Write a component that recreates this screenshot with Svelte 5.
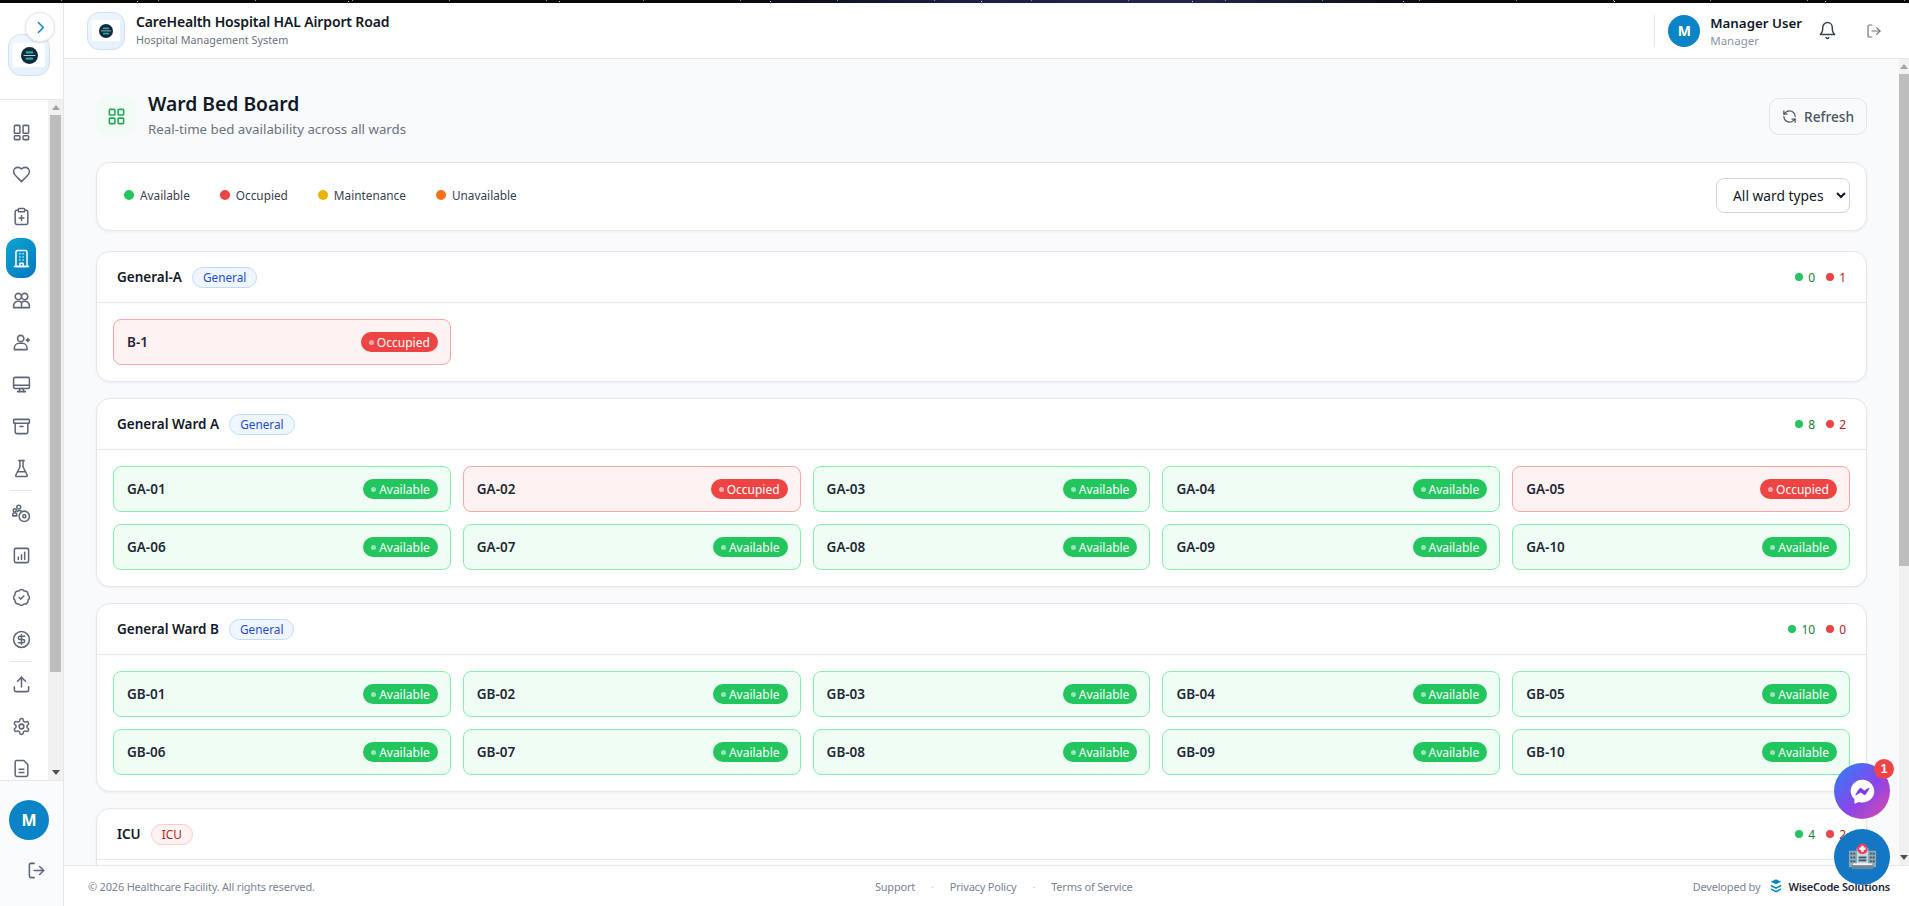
<script>
  const navTop = [
    ["M4 3h5a1 1 0 0 1 1 1v8a1 1 0 0 1-1 1H4a1 1 0 0 1-1-1V4a1 1 0 0 1 1-1z", "M15 3h5a1 1 0 0 1 1 1v8a1 1 0 0 1-1 1h-5a1 1 0 0 1-1-1V4a1 1 0 0 1 1-1z", "M4 16h5a1 1 0 0 1 1 1v3a1 1 0 0 1-1 1H4a1 1 0 0 1-1-1v-3a1 1 0 0 1 1-1z", "M15 16h5a1 1 0 0 1 1 1v3a1 1 0 0 1-1 1h-5a1 1 0 0 1-1-1v-3a1 1 0 0 1 1-1z"],
    ["M19 14c1.49-1.46 3-3.21 3-5.5A5.5 5.5 0 0 0 16.5 3c-1.76 0-3 .5-4.5 2-1.5-1.5-2.74-2-4.5-2A5.5 5.5 0 0 0 2 8.5c0 2.3 1.5 4.05 3 5.5l7 7Z"],
    ["M9 2h6a1 1 0 0 1 1 1v2a1 1 0 0 1-1 1H9a1 1 0 0 1-1-1V3a1 1 0 0 1 1-1z", "M16 4h2a2 2 0 0 1 2 2v14a2 2 0 0 1-2 2H6a2 2 0 0 1-2-2V6a2 2 0 0 1 2-2h2", "M9 14h6", "M12 17v-6"],
    ["M5 22V4a2 2 0 0 1 2-2h10a2 2 0 0 1 2 2v18Z", "M3 22h18", "M10 22v-4h4v4", "M10 6h.01", "M14 6h.01", "M10 10h.01", "M14 10h.01", "M10 14h.01", "M14 14h.01"],
    ["M8 11a4 4 0 1 0 0-8 4 4 0 0 0 0 8z", "M16 11a4 4 0 1 0 0-8 4 4 0 0 0 0 8z", "M2 21v-2a6 6 0 0 1 10-4.5A6 6 0 0 1 22 19v2Z", "M12 14.5V21"],
    ["M11 11a4 4 0 1 0 0-8 4 4 0 0 0 0 8z", "M3 21v-2a6 6 0 0 1 6-6h4a6 6 0 0 1 6 6v2Z", "M20 7v4", "M18 9h4"],
    ["M4 3h16a2 2 0 0 1 2 2v10a2 2 0 0 1-2 2H4a2 2 0 0 1-2-2V5a2 2 0 0 1 2-2z", "M2 13h20", "M9 21l1-4h4l1 4", "M7 21h10"],
    ["M3 3h18a1 1 0 0 1 1 1v3a1 1 0 0 1-1 1H3a1 1 0 0 1-1-1V4a1 1 0 0 1 1-1z", "M4 8v11a2 2 0 0 0 2 2h12a2 2 0 0 0 2-2V8", "M10 12h4"],
    ["M10 2v7.53a2 2 0 0 1-.21.9L4.72 20.55A1 1 0 0 0 5.62 22h12.76a1 1 0 0 0 .9-1.45l-5.07-10.12a2 2 0 0 1-.21-.9V2", "M8.5 2h7", "M7 16h10"],
  ];
  const navMid = [
    ["M8.5 6.5a2.5 2.5 0 1 0 0-5 2.5 2.5 0 0 0 0 5z", "M3.5 10a2 2 0 1 0 0-4 2 2 0 0 0 0 4z", "M1 15v-1.5a2.5 2.5 0 0 1 5 0V15z", "M7 9.5a3 3 0 0 1 5 0", "M15.5 22a6.5 6.5 0 1 0 0-13 6.5 6.5 0 0 0 0 13z", "M15.5 17.5a2 2 0 1 0 0-4 2 2 0 0 0 0 4z"],
    ["M5 3h14a2 2 0 0 1 2 2v14a2 2 0 0 1-2 2H5a2 2 0 0 1-2-2V5a2 2 0 0 1 2-2z", "M8 17v-3", "M12 17v-6", "M16 17V8"],
    ["M3.85 8.62a4 4 0 0 1 4.78-4.77 4 4 0 0 1 6.74 0 4 4 0 0 1 4.78 4.78 4 4 0 0 1 0 6.74 4 4 0 0 1-4.77 4.78 4 4 0 0 1-6.75 0 4 4 0 0 1-4.78-4.77 4 4 0 0 1 0-6.76Z", "m9 12 2 2 4-4"],
    ["M12 22a10 10 0 1 0 0-20 10 10 0 0 0 0 20z", "M16 8h-6a2 2 0 1 0 0 4h4a2 2 0 1 1 0 4H8", "M12 18V6"],
  ];
  const gear = ["M12.22 2h-.44a2 2 0 0 0-2 2v.18a2 2 0 0 1-1 1.73l-.43.25a2 2 0 0 1-2 0l-.15-.08a2 2 0 0 0-2.73.73l-.22.38a2 2 0 0 0 .73 2.73l.15.1a2 2 0 0 1 1 1.72v.51a2 2 0 0 1-1 1.74l-.15.09a2 2 0 0 0-.73 2.73l.22.38a2 2 0 0 0 2.73.73l.15-.08a2 2 0 0 1 2 0l.43.25a2 2 0 0 1 1 1.73V20a2 2 0 0 0 2 2h.44a2 2 0 0 0 2-2v-.18a2 2 0 0 1 1-1.73l.43-.25a2 2 0 0 1 2 0l.15.08a2 2 0 0 0 2.73-.73l.22-.39a2 2 0 0 0-.73-2.73l-.15-.08a2 2 0 0 1-1-1.74v-.5a2 2 0 0 1 1-1.74l.15-.09a2 2 0 0 0 .73-2.73l-.22-.38a2 2 0 0 0-2.73-.73l-.15.08a2 2 0 0 1-2 0l-.43-.25a2 2 0 0 1-1-1.73V4a2 2 0 0 0-2-2z", "M12 15a3 3 0 1 0 0-6 3 3 0 0 0 0 6z"];
  const navBottom = [
    ["M12 15V3", "M7 8l5-5 5 5", "M21 15v4a2 2 0 0 1-2 2H5a2 2 0 0 1-2-2v-4"],
    gear,
    ["M15 2H6a2 2 0 0 0-2 2v16a2 2 0 0 0 2 2h12a2 2 0 0 0 2-2V7Z", "M9 13h6", "M9 17h6"],
  ];
  const logout = ["M9 21H5a2 2 0 0 1-2-2V5a2 2 0 0 1 2-2h4", "M16 17l5-5-5-5", "M21 12H9"];

  const legend = [
    { label: "Available", color: "#22c55e" },
    { label: "Occupied", color: "#ef4444" },
    { label: "Maintenance", color: "#eab308" },
    { label: "Unavailable", color: "#f97316" },
  ];

  function ward(name, type, prefix, occupied = []) {
    const beds = [];
    for (let i = 1; i <= 10; i++) {
      const n = String(i).padStart(2, "0");
      beds.push({ id: prefix + "-" + n, occupied: occupied.includes(i) });
    }
    return { name, type, beds, free: 10 - occupied.length, taken: occupied.length };
  }

  const wards = [
    { name: "General-A", type: "General", beds: [{ id: "B-1", occupied: true }], free: 0, taken: 1 },
    ward("General Ward A", "General", "GA", [2, 5]),
    ward("General Ward B", "General", "GB"),
    { name: "ICU", type: "ICU", beds: [], free: 4, taken: 2 },
  ];
</script>

{#snippet icon(paths, size = 19, width = 1.9)}
  <svg class="ico" viewBox="0 0 24 24" width={size} height={size} fill="none" stroke="currentColor" stroke-width={width} stroke-linecap="round" stroke-linejoin="round">
    {#each paths as d}<path {d} />{/each}
  </svg>
{/snippet}

{#snippet logo(cls)}
  <div class="logo {cls}">
    <div class="logo-inner">
      <svg viewBox="0 0 20 20" class="logo-mark">
        <circle cx="10" cy="10" r="10" fill="#0f2a3d" />
        <rect x="5.5" y="5" width="9" height="2.6" rx="1.2" fill="#2aa6a0" />
        <rect x="3" y="9.4" width="14" height="1" fill="#d7e8ee" />
        <rect x="5.5" y="12.4" width="9" height="2.6" rx="1.2" fill="#2aa6a0" />
      </svg>
    </div>
  </div>
{/snippet}

{#snippet scrollbar(thumb)}
  <div class="bar">
    <div class="bar-btn"><i class="up"></i></div>
    <div class="bar-track"><div class="bar-thumb" style="height:{thumb}px"></div></div>
    <div class="bar-btn"><i class="down"></i></div>
  </div>
{/snippet}

<div class="strip"></div>
<div class="app">
  <aside class="sidebar">
    <div class="side-top">
      <button class="toggle" aria-label="Expand sidebar">
        <svg viewBox="0 0 24 24" width="17" height="17" fill="none" stroke="#0284c7" stroke-width="2" stroke-linecap="round" stroke-linejoin="round"><path d="m9 5 7 7-7 7" /></svg>
      </button>
      {@render logo("logo-big")}
    </div>
    <div class="nav-wrap">
      <nav class="nav">
        {#each navTop as paths, i}
          <div class="nav-item" class:active={i === 3}>{@render icon(paths)}</div>
        {/each}
        <div class="nav-sep"></div>
        {#each navMid as paths}
          <div class="nav-item">{@render icon(paths)}</div>
        {/each}
        <div class="nav-sep"></div>
        {#each navBottom as paths}
          <div class="nav-item">{@render icon(paths)}</div>
        {/each}
      </nav>
      {@render scrollbar(557)}
    </div>
    <div class="side-bottom">
      <div class="avatar big">M</div>
      <div class="side-logout">{@render icon(logout)}</div>
    </div>
  </aside>

  <div class="right">
    <header class="topbar">
      {@render logo("logo-small")}
      <div class="brand">
        <div class="brand-name">CareHealth Hospital HAL Airport Road</div>
        <div class="brand-sub">Hospital Management System</div>
      </div>
      <div class="top-user">
        <div class="avatar">M</div>
        <div class="user-text">
          <div class="user-name">Manager User</div>
          <div class="user-role">Manager</div>
        </div>
      </div>
      <div class="bell">{@render icon(["M6 8a6 6 0 0 1 12 0c0 7 3 9 3 9H3s3-2 3-9", "M10.3 21a1.94 1.94 0 0 0 3.4 0"])}</div>
      <div class="top-logout">{@render icon(logout, 16, 1.75)}</div>
    </header>

    <div class="main-wrap">
      <main class="main">
        <div class="page-head">
          <div class="page-icon">{@render icon(["M4 3h5a1 1 0 0 1 1 1v5a1 1 0 0 1-1 1H4a1 1 0 0 1-1-1V4a1 1 0 0 1 1-1z", "M15 3h5a1 1 0 0 1 1 1v5a1 1 0 0 1-1 1h-5a1 1 0 0 1-1-1V4a1 1 0 0 1 1-1z", "M4 14h5a1 1 0 0 1 1 1v5a1 1 0 0 1-1 1H4a1 1 0 0 1-1-1v-5a1 1 0 0 1 1-1z", "M15 14h5a1 1 0 0 1 1 1v5a1 1 0 0 1-1 1h-5a1 1 0 0 1-1-1v-5a1 1 0 0 1 1-1z"], 19, 2)}</div>
          <div class="page-title">
            <h1>Ward Bed Board</h1>
            <p>Real-time bed availability across all wards</p>
          </div>
          <button class="refresh">
            {@render icon(["M21 12a9 9 0 0 0-9-9 9.75 9.75 0 0 0-6.74 2.74L3 8", "M3 3v5h5", "M3 12a9 9 0 0 0 9 9 9.75 9.75 0 0 0 6.74-2.74L21 16", "M16 16h5v5"], 15, 2)}
            Refresh
          </button>
        </div>

        <section class="card legend">
          <div class="legend-items">
            {#each legend as item}
              <span class="legend-item"><i class="dot" style="background:{item.color}"></i>{item.label}</span>
            {/each}
          </div>
          <select class="type-select">
            <option>All ward types</option>
            <option>General</option>
            <option>ICU</option>
          </select>
        </section>

        {#each wards as w}
          <section class="card ward">
            <div class="ward-head">
              <span class="ward-name">{w.name}</span>
              <span class="pill" class:red={w.type === "ICU"}>{w.type}</span>
              <span class="counts">
                <i class="cdot green"></i><span class="cnum g">{w.free}</span>
                <i class="cdot redd"></i><span class="cnum r">{w.taken}</span>
              </span>
            </div>
            <div class="beds">
              {#each w.beds as bed}
                <div class="bed" class:occ={bed.occupied}>
                  <span class="bed-id">{bed.id}</span>
                  <span class="status"><i></i>{bed.occupied ? "Occupied" : "Available"}</span>
                </div>
              {/each}
            </div>
          </section>
        {/each}
      </main>
      {@render scrollbar(492)}
    </div>

    <footer class="footer">
      <div>© 2026 Healthcare Facility. All rights reserved.</div>
      <div class="foot-links">
        <span>Support</span><b>·</b><span>Privacy Policy</span><b>·</b><span>Terms of Service</span>
      </div>
      <div class="foot-right">
        Developed by
        <svg viewBox="0 0 14 16" width="12" height="14" class="wc-logo">
          <path d="M7 0 13 3 7 6 1 3z" fill="#0284c7" />
          <path d="M1 6.5 7 9.5l6-3v2L7 11.5l-6-3z" fill="#0284c7" />
          <path d="M1 10.5l6 3 6-3v2l-6 3-6-3z" fill="#0284c7" />
        </svg>
        <strong>WiseCode Solutions</strong>
      </div>
    </footer>
  </div>

  <button class="fab messenger" aria-label="Messenger">
    <svg viewBox="0 0 32 32" width="27" height="27">
      <path d="M16 2C8.2 2 2 7.8 2 15.3c0 3.9 1.7 7.3 4.4 9.7v4.5c0 .7.7 1.100 1.3.8l4-1.800c1.400.4 2.800.6 4.300.6 7.800 0 14-5.800 14-13.300S23.800 2 16 2z" fill="#fff" />
      <path d="M7.6 19.5 12 12.700c.6-.9 1.800-1.100 2.700-.5l3.400 2.600 5.500-3.200c.5-.3 1 .3.7.8L20 19.200c-.6.900-1.800 1.100-2.700.5l-3.400-2.600-5.500 3.200c-.5.3-1.100-.3-.8-.8z" fill="#7b3fe0" />
    </svg>
    <span class="badge">1</span>
  </button>
  <button class="fab hospital" aria-label="Hospital">
    <svg viewBox="0 0 32 32" width="31" height="31">
      <rect x="2" y="9" width="8" height="17" fill="#8fa8b4" />
      <rect x="22" y="9" width="8" height="17" fill="#8fa8b4" />
      <rect x="10" y="6" width="12" height="20" fill="#c9d6dc" />
      <g fill="#3d5a6c">
        <rect x="3.5" y="11" width="2" height="2" /><rect x="6.5" y="11" width="2" height="2" />
        <rect x="3.5" y="15" width="2" height="2" /><rect x="6.5" y="15" width="2" height="2" />
        <rect x="3.5" y="19" width="2" height="2" /><rect x="6.5" y="19" width="2" height="2" />
        <rect x="23.5" y="11" width="2" height="2" /><rect x="26.5" y="11" width="2" height="2" />
        <rect x="23.5" y="15" width="2" height="2" /><rect x="26.5" y="15" width="2" height="2" />
        <rect x="23.5" y="19" width="2" height="2" /><rect x="26.5" y="19" width="2" height="2" />
        <rect x="12" y="15" width="8" height="2" /><rect x="12" y="18" width="8" height="2" />
      </g>
      <rect x="6" y="22" width="20" height="2" fill="#eef3f5" />
      <rect x="5" y="24" width="22" height="4" fill="#6f8794" />
      <circle cx="16" cy="7" r="5.5" fill="#e9405a" />
      <path d="M14.8 3.8h2.4V5.8h2V8.2h-2v2h-2.4v-2h-2V5.8h2z" fill="#fff" />
    </svg>
  </button>
</div>

<style>
  :global(body) {
    margin: 0;
    font-family: "Noto Sans", "Open Sans", sans-serif;
    color: #111827;
    overflow: hidden;
  }
  .strip {
    height: 3px;
    background:
      repeating-linear-gradient(90deg, transparent 0 137px, #d8d8e0 137px 138px, transparent 138px 211px),
      repeating-linear-gradient(90deg, transparent 0 61px, #8a8aa8 61px 62px, transparent 62px 97px),
      linear-gradient(90deg, #08080b 0 38%, #1d1d45 50%, #25254d 62%, #08080b 76%);
    background-size: 100% 1px, 100% 1px, 100% 100%;
    background-repeat: no-repeat;
    background-position: 0 1px, 0 0, 0 0;
  }
  .app {
    display: flex;
    height: 903px;
    position: relative;
    background: #fff;
  }

  .sidebar {
    width: 64px;
    flex: none;
    display: flex;
    flex-direction: column;
    box-sizing: border-box;
    background: #fff;
    border-right: 1px solid #e5e7eb;
  }
  .side-top {
    position: relative;
    height: 97px;
    flex: none;
    border-bottom: 1px solid #e5e7eb;
    box-sizing: border-box;
  }
  .toggle {
    position: absolute;
    left: 25px;
    top: 9px;
    width: 30px;
    height: 30px;
    padding: 0;
    border-radius: 50%;
    border: 1px solid #e5e7eb;
    background: #fff;
    box-shadow: 0 1px 3px rgba(15, 23, 42, 0.1);
    display: flex;
    align-items: center;
    justify-content: center;
    z-index: 2;
  }
  .logo {
    box-sizing: border-box;
    border: 1px solid #cfe0f3;
    background: linear-gradient(135deg, #f0f7ff, #e4effb);
    display: flex;
    align-items: center;
    justify-content: center;
  }
  .logo-big {
    width: 42px;
    height: 42px;
    border-radius: 13px;
    margin: 31px 0 0 8px;
  }
  .logo-small {
    width: 38px;
    height: 38px;
    border-radius: 12px;
    flex: none;
  }
  .logo-inner {
    background: #fff;
    width: 80%;
    height: 60%;
    display: flex;
    align-items: center;
    justify-content: center;
  }
  .logo-big .logo-mark {
    width: 17px;
    height: 17px;
  }
  .logo-small .logo-mark {
    width: 14px;
    height: 14px;
  }

  .nav-wrap {
    flex: 1;
    min-height: 0;
    display: flex;
  }
  .nav {
    flex: 1;
    min-width: 0;
    overflow: hidden;
    padding: 12px 0 0;
    box-sizing: border-box;
  }
  .nav-item {
    width: 30px;
    height: 40px;
    margin: 0 0 2px 6px;
    border-radius: 12px;
    display: flex;
    align-items: center;
    justify-content: center;
    color: #5d6678;
  }
  .nav-item.active {
    background: linear-gradient(135deg, #0ea5d0, #0477bf);
    color: #fff;
  }
  .nav-sep {
    height: 1px;
    width: 22px;
    margin: 2px 0 2px 10px;
    background: #e5e7eb;
  }
  .ico {
    display: block;
    flex: none;
  }

  .bar {
    flex: none;
    display: flex;
    flex-direction: column;
    background: #f1f1f1;
    width: 15px;
  }
  .main-wrap .bar {
    width: 10px;
  }
  .bar-btn {
    height: 15px;
    flex: none;
    display: flex;
    align-items: center;
    justify-content: center;
  }
  .bar-btn i {
    width: 0;
    height: 0;
    border-left: 4px solid transparent;
    border-right: 4px solid transparent;
  }
  .bar-btn .up {
    border-bottom: 5px solid #a3a3a3;
  }
  .bar-btn .down {
    border-top: 5px solid #505050;
  }
  .bar-track {
    flex: 1;
    min-height: 0;
    padding: 0 2px;
  }
  .main-wrap .bar-track {
    padding: 0;
  }
  .bar-thumb {
    background: #bdbdbd;
  }

  .side-bottom {
    flex: none;
    height: 126px;
    border-top: 1px solid #e5e7eb;
    box-sizing: border-box;
    background: #f9fbfd;
    padding: 19px 0 0 9px;
  }
  .avatar {
    width: 32px;
    height: 32px;
    flex: none;
    border-radius: 50%;
    background: #0a84c6;
    color: #fff;
    font-weight: 700;
    font-size: 14px;
    display: flex;
    align-items: center;
    justify-content: center;
  }
  .avatar.big {
    width: 40px;
    height: 40px;
    font-size: 16px;
  }
  .side-logout {
    margin: 21px 0 0 18px;
    color: #5d6678;
  }

  .right {
    flex: 1;
    min-width: 0;
    display: flex;
    flex-direction: column;
  }
  .topbar {
    height: 56px;
    flex: none;
    box-sizing: border-box;
    border-bottom: 1px solid #e5e7eb;
    background: #fff;
    display: flex;
    align-items: center;
    padding: 0 27px 0 23px;
  }
  .brand {
    margin-left: 11px;
    padding-bottom: 3px;
    flex: 1;
  }
  .brand-name {
    font-size: 14px;
    font-weight: 600;
    line-height: 20px;
    letter-spacing: -0.15px;
    color: #111827;
  }
  .brand-sub {
    font-size: 10.8px;
    line-height: 15px;
    color: #6b7280;
  }
  .top-user {
    display: flex;
    align-items: center;
    gap: 10px;
    border-left: 1px solid #e5e7eb;
    padding-left: 13px;
    height: 32px;
  }
  .user-name {
    font-size: 13.3px;
    font-weight: 600;
    line-height: 20px;
    color: #111827;
  }
  .user-role {
    font-size: 11.5px;
    line-height: 15px;
    color: #8b95a5;
  }
  .bell {
    margin-left: 16px;
    color: #374151;
  }
  .top-logout {
    margin-left: 29px;
    color: #6b7280;
  }

  .main-wrap {
    flex: 1;
    min-height: 0;
    display: flex;
  }
  .main {
    flex: 1;
    min-width: 0;
    overflow: hidden;
    background: #f8fafc;
    padding: 37px 32px 0;
    box-sizing: border-box;
  }

  .page-head {
    display: flex;
    align-items: center;
    height: 40px;
    margin-bottom: 26px;
  }
  .page-icon {
    width: 40px;
    height: 40px;
    flex: none;
    border-radius: 12px;
    background: #f2fbf5;
    color: #22a855;
    display: flex;
    align-items: center;
    justify-content: center;
  }
  .page-title {
    margin-left: 12px;
    flex: 1;
  }
  h1 {
    margin: 0;
    font-size: 19.3px;
    font-weight: 600;
    line-height: 25px;
    color: #111827;
  }
  .page-title p {
    margin: 0;
    font-size: 13.3px;
    line-height: 26px;
    color: #6b7280;
  }
  .refresh {
    display: flex;
    align-items: center;
    gap: 7px;
    height: 37px;
    padding: 0 12px;
    border: 1px solid #e5e7eb;
    border-radius: 10px;
    background: #f9fafb;
    color: #4b5563;
    font: 500 13.7px "Noto Sans", sans-serif;
  }

  .card {
    background: #fff;
    border: 1px solid #e5e7eb;
    border-radius: 14px;
    box-shadow: 0 1px 3px rgba(15, 23, 42, 0.05);
    box-sizing: border-box;
  }
  .legend {
    display: flex;
    align-items: center;
    justify-content: space-between;
    height: 69px;
    padding: 0 16px 3px 27px;
    margin-bottom: 20px;
  }
  .legend-items {
    display: flex;
    gap: 30px;
  }
  .legend-item {
    display: flex;
    align-items: center;
    gap: 6px;
    font-size: 11.8px;
    color: #374151;
  }
  .dot {
    width: 10px;
    height: 10px;
    border-radius: 50%;
  }
  .type-select {
    width: 134px;
    height: 35px;
    border: 1px solid #d1d5db;
    border-radius: 8px;
    background: #fff;
    color: #111827;
    padding: 0 8px 0 12px;
    font: 13.8px "Noto Sans", sans-serif;
  }

  .ward {
    margin-bottom: 16px;
  }
  .ward-head {
    display: flex;
    align-items: center;
    height: 50px;
    padding: 0 20px;
    border-bottom: 1px solid #e5e7eb;
  }
  .ward-name {
    font-size: 13.5px;
    font-weight: 600;
    color: #111827;
  }
  .pill {
    margin-left: 10px;
    padding: 0 10px;
    height: 21px;
    line-height: 19px;
    box-sizing: border-box;
    border-radius: 11px;
    border: 1px solid #bfdbfe;
    background: #eff6ff;
    color: #1d4ed8;
    font-size: 11.8px;
  }
  .pill.red {
    border-color: #fecaca;
    background: #fef2f2;
    color: #b91c1c;
  }
  .counts {
    margin-left: auto;
    display: flex;
    align-items: center;
    font-size: 12px;
  }
  .cdot {
    width: 8px;
    height: 8px;
    border-radius: 50%;
    margin-right: 5px;
  }
  .cdot.green {
    background: #22c55e;
  }
  .cdot.redd {
    background: #ef4444;
  }
  .cnum {
    margin-right: 11px;
  }
  .cnum:last-child {
    margin-right: 0;
  }
  .cnum.g {
    color: #15803d;
  }
  .cnum.r {
    color: #b91c1c;
  }

  .beds {
    display: grid;
    grid-template-columns: repeat(5, 1fr);
    gap: 12px;
    padding: 16px;
    min-height: 46px;
  }
  .bed {
    display: flex;
    align-items: center;
    justify-content: space-between;
    height: 46px;
    box-sizing: border-box;
    padding: 0 12px 0 13px;
    border: 1px solid #86efac;
    border-radius: 8px;
    background: #f0fdf4;
  }
  .bed.occ {
    border-color: #fca5a5;
    background: #fef2f2;
  }
  .bed-id {
    font-size: 13.5px;
    font-weight: 600;
    color: #1f2937;
  }
  .status {
    display: flex;
    align-items: center;
    gap: 3px;
    height: 20px;
    padding: 0 8px;
    border-radius: 10px;
    background: #22c55e;
    color: #fff;
    font-size: 12px;
  }
  .status i {
    width: 5px;
    height: 5px;
    border-radius: 50%;
    background: rgba(255, 255, 255, 0.55);
  }
  .occ .status {
    background: #ef4444;
  }

  .footer {
    height: 41px;
    flex: none;
    box-sizing: border-box;
    border-top: 1px solid #e5e7eb;
    background: #fff;
    display: flex;
    justify-content: space-between;
    align-items: center;
    padding: 0 19px 0 24px;
    font-size: 11px;
    letter-spacing: -0.2px;
    color: #7b8494;
  }
  .foot-links {
    display: flex;
    gap: 16px;
    align-items: center;
  }
  .foot-links b {
    font-weight: 400;
    color: #c4c9d2;
  }
  .foot-right {
    display: flex;
    align-items: center;
    gap: 5px;
  }
  .wc-logo {
    margin: 0 1px 0 5px;
  }
  .foot-right strong {
    color: #1f2937;
    font-weight: 600;
  }

  .fab {
    position: absolute;
    right: 19px;
    width: 56px;
    height: 56px;
    padding: 0;
    border: 0;
    border-radius: 50%;
    display: flex;
    align-items: center;
    justify-content: center;
  }
  .messenger {
    top: 760px;
    background: linear-gradient(135deg, #2f80f7 5%, #8a44ea 55%, #d64bb0 95%);
  }
  .hospital {
    top: 826px;
    background: #1477c5;
  }
  .badge {
    position: absolute;
    right: -4px;
    top: -4px;
    width: 20px;
    height: 20px;
    border-radius: 50%;
    background: #ef4444;
    color: #fff;
    font-size: 12px;
    font-weight: 700;
    line-height: 20px;
    text-align: center;
  }
</style>
